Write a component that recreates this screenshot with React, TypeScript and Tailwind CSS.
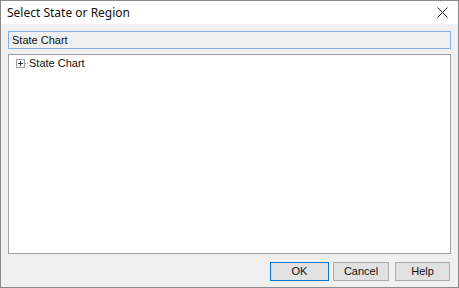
import React from "react";

export default function App() {
  const title = { fontFamily: '"Segoe UI", "Noto Sans", "Liberation Sans", sans-serif' };
  const body = { fontFamily: '"Liberation Sans", Arial, sans-serif' };
  return (
    <div className="w-[459px] h-[288px] bg-white">
      <div className="w-[459px] h-[288px] border border-[#8a8a8a] flex flex-col bg-[#f0f0f0]">
        <div className="h-[23px] bg-white flex items-center justify-between pl-[6px] pr-[8px]" style={title}>
          <span className="text-[12px] text-[#111] leading-none">Select State or Region</span>
          <svg width="11" height="11" viewBox="0 0 11 11" className="mr-[2px]">
            <path d="M0.5 0.5 L10.5 10.5 M10.5 0.5 L0.5 10.5" stroke="#222" strokeWidth="1" />
          </svg>
        </div>
        <div className="flex-1 flex flex-col px-[7px] pt-[7px] pb-[6px]" style={body}>
          <div className="h-[18px] border border-[#7eb4ea] bg-[#f0f0f0] flex items-center pl-[3px] text-[11px] text-[#111] leading-none">
            State Chart
          </div>
          <div className="mt-[5px] h-[200px] border border-[#a0a0a0] bg-white pt-[3px] pl-[7px]">
            <div className="flex items-center h-[11px]">
              <div className="w-[9px] h-[9px] border border-[#a0a0a0] flex items-center justify-center">
                <svg width="7" height="7" viewBox="0 0 7 7">
                  <path d="M1 3.5 H6 M3.5 1 V6" stroke="#333" strokeWidth="1" />
                </svg>
              </div>
              <div className="w-[3px] border-t border-dotted border-[#a0a0a0]" />
              <span className="ml-[1px] text-[11px] text-[#111] leading-none">State Chart</span>
            </div>
          </div>
          <div className="flex justify-end mt-[8px] pr-[1px]">
            <button className="w-[59px] h-[19px] border border-[#0078d7] bg-[#e1e1e1] text-[11px] text-[#111] leading-none">OK</button>
            <button className="ml-[4px] w-[56px] h-[19px] border border-[#adadad] bg-[#e1e1e1] text-[11px] text-[#111] leading-none">Cancel</button>
            <button className="ml-[6px] w-[55px] h-[19px] border border-[#adadad] bg-[#e1e1e1] text-[11px] text-[#111] leading-none">Help</button>
          </div>
        </div>
      </div>
    </div>
  );
}
